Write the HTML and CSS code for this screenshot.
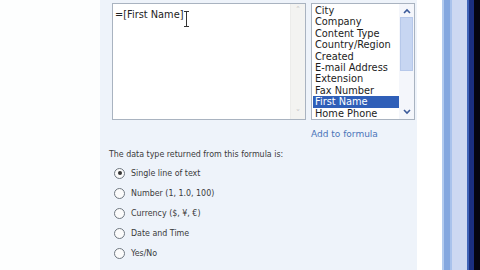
FILE: index.html
```html
<!DOCTYPE html>
<html>
<head>
<meta charset="utf-8">
<link rel="stylesheet" href="styles.css">
</head>
<body>
<div class="page">
  <div class="left-space"></div>
  <div class="panel">
    <div class="editors">
      <div class="formula">
        <div class="formula-text">=[First Name]<span class="ibeam"></span></div>
        <div class="vscroll grey">
          <div class="arrow up">&#x2c4;</div>
          <div class="track"></div>
          <div class="arrow down">&#x2c5;</div>
        </div>
      </div>
      <div class="listbox">
        <ul class="items">
          <li>City</li>
          <li>Company</li>
          <li>Content Type</li>
          <li>Country/Region</li>
          <li>Created</li>
          <li>E-mail Address</li>
          <li>Extension</li>
          <li>Fax Number</li>
          <li class="selected">First Name</li>
          <li>Home Phone</li>
        </ul>
        <div class="vscroll blue">
          <div class="arrow up">
            <svg width="8" height="6" viewBox="0 0 8 6"><path d="M1 5 L4 2 L7 5" fill="none" stroke="#3b5a9a" stroke-width="1.6"/></svg>
          </div>
          <div class="track"><div class="thumb"></div></div>
          <div class="arrow down">
            <svg width="8" height="6" viewBox="0 0 8 6"><path d="M1 1 L4 4 L7 1" fill="none" stroke="#3b5a9a" stroke-width="1.6"/></svg>
          </div>
        </div>
      </div>
    </div>
    <div class="add-row"><a class="add-link">Add to formula</a></div>
    <div class="type-label">The data type returned from this formula is:</div>
    <ul class="radios">
      <li><span class="radio checked"></span>Single line of text</li>
      <li><span class="radio"></span>Number (1, 1.0, 100)</li>
      <li><span class="radio"></span>Currency ($, ¥, €)</li>
      <li><span class="radio"></span>Date and Time</li>
      <li><span class="radio"></span>Yes/No</li>
    </ul>
  </div>
  <div class="gap-space"></div>
  <div class="frame">
    <div class="f1"></div>
    <div class="f2"></div>
    <div class="f3"></div>
    <div class="f4"></div>
    <div class="f5"></div>
    <div class="f6"></div>
    <div class="f7"></div>
  </div>
</div>
</body>
</html>
```
FILE: styles.css
```css
html, body {
  margin: 0;
  padding: 0;
  background: #ffffff;
}
.page {
  display: flex;
  width: 480px;
  height: 270px;
  overflow: hidden;
  font-family: "DejaVu Sans", Verdana, sans-serif;
}
.left-space {
  width: 100px;
  flex: none;
  background: #fdfefe;
}
.panel {
  width: 317px;
  flex: none;
  background: #eef3fa;
  padding-top: 3px;
  box-sizing: border-box;
}
.editors {
  display: flex;
  gap: 5px;
  margin-left: 12px;
}
.formula {
  width: 194px;
  height: 117px;
  box-sizing: border-box;
  border: 1px solid #a9b3c0;
  background: #ffffff;
  display: flex;
}
.formula-text {
  flex: 1;
  font-size: 9.8px;
  color: #222;
  padding: 5px 0 0 2px;
  position: relative;
}
.ibeam {
  display: inline-block;
  width: 1px;
  height: 16px;
  background: #333;
  vertical-align: -9px;
  margin-left: 2px;
  position: relative;
}
.ibeam::before, .ibeam::after {
  content: "";
  position: absolute;
  left: -2px;
  width: 5px;
  height: 1px;
  background: #333;
}
.ibeam::before { top: 0; }
.ibeam::after { bottom: 0; }
.vscroll {
  width: 14px;
  display: flex;
  flex-direction: column;
  flex: none;
}
.vscroll.grey {
  background: #f3f3f1;
  border-left: 1px solid #ececea;
}
.vscroll.grey .arrow {
  height: 12px;
  font-size: 9px;
  color: #c8c8c8;
  text-align: center;
  line-height: 12px;
}
.vscroll .track { flex: 1; }
.listbox {
  width: 104px;
  height: 117px;
  box-sizing: border-box;
  border: 1px solid #a9b3c0;
  background: #ffffff;
  display: flex;
}
.items {
  list-style: none;
  margin: 0;
  padding: 1px 0 0 1px;
  flex: 1;
  font-size: 9.8px;
  color: #1c1c1c;
}
.items li {
  height: 11.4px;
  line-height: 11.4px;
  padding-left: 2px;
  white-space: nowrap;
  overflow: hidden;
}
.items li.selected {
  background: #2f5fb8;
  color: #ffffff;
}
.vscroll.blue {
  background: #f4f6fb;
  width: 13px;
  padding: 1px 1px;
}
.vscroll.blue .arrow {
  height: 12px;
  display: flex;
  align-items: center;
  justify-content: center;
}
.vscroll.blue .track {
  display: flex;
  flex-direction: column;
}
.thumb {
  height: 52px;
  background: #c7d6f2;
  border: 1px solid #b6c8ea;
}
.add-row {
  margin: 2px 0 0 211px;
  height: 12px;
}
.add-link {
  font-size: 9px;
  color: #4a74b8;
}
.type-label {
  margin: 15px 0 0 9px;
  font-family: "DejaVu Sans Condensed", "DejaVu Sans", sans-serif;
  font-size: 8.8px;
  color: #3a3a3a;
}
.radios {
  list-style: none;
  margin: 4px 0 0 14px;
  padding: 0;
  font-family: "DejaVu Sans Condensed", "DejaVu Sans", sans-serif;
  font-size: 8.8px;
  color: #3a3a3a;
}
.radios li {
  height: 20px;
  display: flex;
  align-items: center;
}
.radio {
  width: 9px;
  height: 9px;
  border: 1px solid #6f7780;
  border-radius: 50%;
  background: #fbfbfb;
  margin-right: 6px;
  display: flex;
  align-items: center;
  justify-content: center;
  flex: none;
}
.radio.checked::after {
  content: "";
  width: 4px;
  height: 4px;
  border-radius: 50%;
  background: #333;
}
.gap-space {
  width: 25px;
  flex: none;
  background: #ffffff;
}
.frame {
  display: flex;
  flex: 1;
}
.frame div { height: 100%; }
.f1 { width: 2px; background: #b3cbee; }
.f2 { width: 6px; background: #84a7df; }
.f3 { width: 2px; background: #a9c2ec; }
.f4 { width: 15px; background: #cdd8f2; }
.f5 { width: 2px; background: #3f63b8; }
.f6 { width: 5px; background: #1b2f80; }
.f7 { width: 6px; background: #050510; }
```
